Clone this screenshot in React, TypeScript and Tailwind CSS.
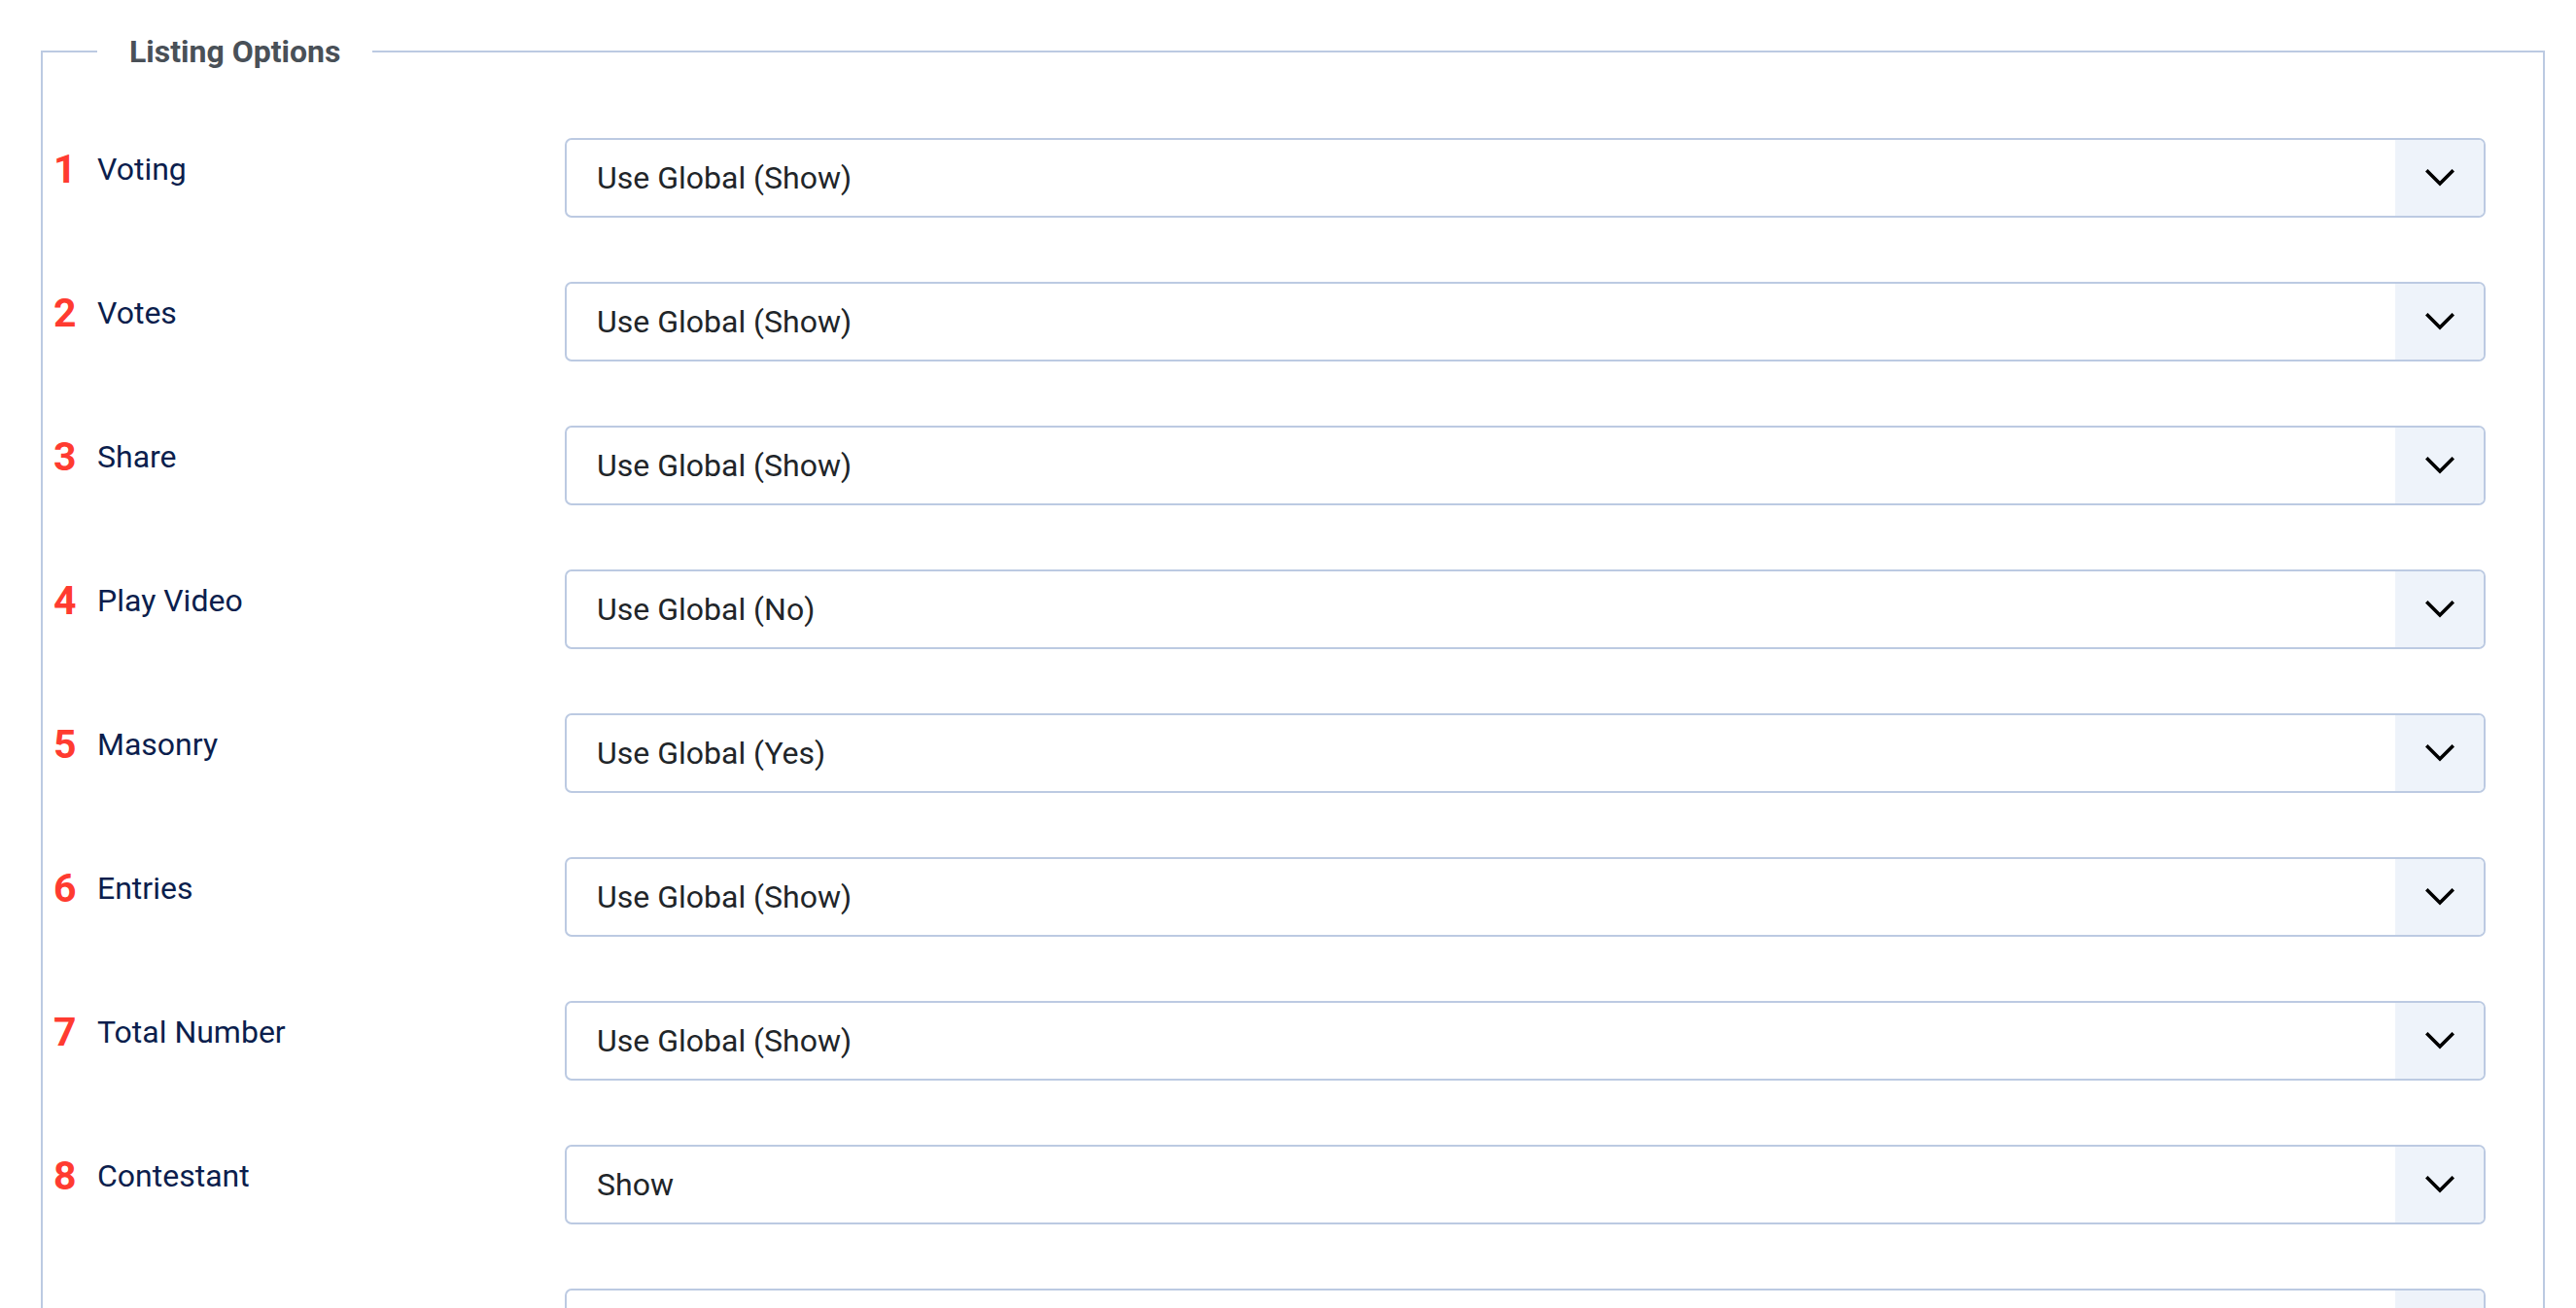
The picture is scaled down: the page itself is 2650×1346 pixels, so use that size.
type Row = { n?: number; label: string; value: string };

const rows: Row[] = [
  { n: 1, label: "Voting", value: "Use Global (Show)" },
  { n: 2, label: "Votes", value: "Use Global (Show)" },
  { n: 3, label: "Share", value: "Use Global (Show)" },
  { n: 4, label: "Play Video", value: "Use Global (No)" },
  { n: 5, label: "Masonry", value: "Use Global (Yes)" },
  { n: 6, label: "Entries", value: "Use Global (Show)" },
  { n: 7, label: "Total Number", value: "Use Global (Show)" },
  { n: 8, label: "Contestant", value: "Show" },
  { label: "Contestant Title", value: "Use Global (Show)" },
];

function Chevron() {
  return (
    <svg width="30" height="18" viewBox="0 0 30 18" fill="none" aria-hidden="true">
      <polyline points="2.5,2.5 15,15 27.5,2.5" stroke="#000" strokeWidth="3.6" strokeLinecap="square" />
    </svg>
  );
}

function SelectBox({ value }: { value: string }) {
  return (
    <div className="flex h-[82px] flex-1 overflow-hidden rounded-[7px] border-2 border-[#bccae2] bg-white">
      <span className="flex flex-1 items-center pl-[31px] text-[32px] leading-none text-[#212529]">{value}</span>
      <span className="grid w-[91px] shrink-0 place-items-center bg-[#eef3fa]">
        <Chevron />
      </span>
    </div>
  );
}

export default function App() {
  return (
    <div className="min-h-screen bg-white pt-[35px] font-['Roboto','Liberation_Sans',sans-serif]">
      <fieldset className="ml-[42px] mr-[32px] border-2 border-[#bccae2] pb-[40px] pl-[11px] pr-[59px] pt-[71px]">
        <legend className="ml-[45px] px-[33px] text-[32px] font-bold leading-[36px] text-[#495057]">
          Listing Options
        </legend>

        <div className="flex flex-col gap-[66px]">
          {rows.map((r) => (
            <div key={r.label} className="flex items-start">
              <div className="flex w-[526px] shrink-0 items-start pt-[9px]">
                <span className="mt-[3px] w-[45px] shrink-0 text-[41px] font-bold leading-[41px] text-[#ff3b30]">
                  {r.n ?? ""}
                </span>
                <span className="text-[32px] leading-[46px] text-[#0b1e4d]">{r.label}</span>
              </div>
              <SelectBox value={r.value} />
            </div>
          ))}
        </div>
      </fieldset>
    </div>
  );
}
